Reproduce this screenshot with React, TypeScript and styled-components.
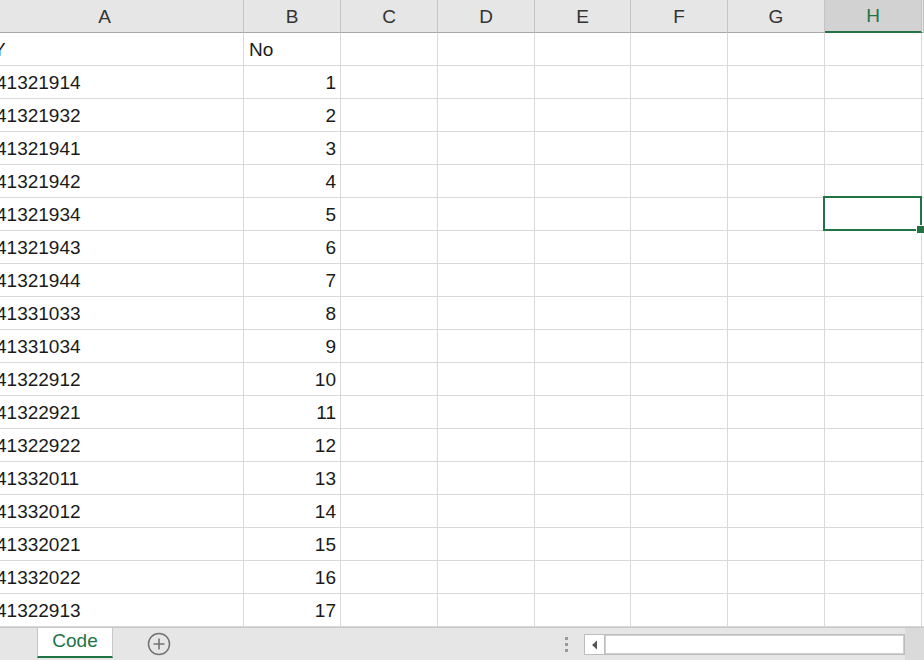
import React from 'react';
import styled, { createGlobalStyle } from 'styled-components';

const GlobalStyle = createGlobalStyle`
  html, body {
    margin: 0;
    padding: 0;
    background: #ffffff;
    overflow: hidden;
  }
  * {
    box-sizing: border-box;
  }
`;

const COLS = '244px 97px 97px 97px 96px 97px 97px 97px 1fr';
const GREEN = '#217346';

const Window = styled.div`
  width: 924px;
  height: 660px;
  display: flex;
  flex-direction: column;
  font-family: 'Liberation Sans', 'Noto Sans CJK JP', sans-serif;
  color: #1a1a1a;
  overflow: hidden;
`;

const Sheet = styled.div`
  flex: 1;
  overflow: hidden;
  display: flex;
  flex-direction: column;
`;

const HeaderRow = styled.div`
  display: grid;
  grid-template-columns: ${COLS};
  height: 33px;
  flex: none;
`;

const HeadCell = styled.div<{ $active?: boolean; $shift?: number }>`
  display: flex;
  align-items: center;
  justify-content: center;
  padding-right: ${({ $shift }) => $shift || 0}px;
  background: ${({ $active }) => ($active ? '#d2d2d2' : '#e6e6e6')};
  border-right: 1px solid #c4c4c4;
  border-bottom: ${({ $active }) => ($active ? `2px solid ${GREEN}` : '1px solid #a8a8a8')};
  color: ${({ $active }) => ($active ? GREEN : '#333333')};
  font-size: 19px;
  padding-top: 1px;
`;

const Row = styled.div`
  display: grid;
  grid-template-columns: ${COLS};
  height: 33px;
  flex: none;
`;

const Cell = styled.div<{ $align?: 'left' | 'right'; $clip?: boolean }>`
  position: relative;
  display: flex;
  align-items: center;
  justify-content: ${({ $align }) => ($align === 'right' ? 'flex-end' : 'flex-start')};
  padding: 2px 4px 0 5px;
  border-right: 1px solid #d9d9d9;
  border-bottom: 1px solid #d9d9d9;
  font-size: 19px;
  white-space: nowrap;
  overflow: ${({ $clip }) => ($clip ? 'hidden' : 'visible')};
`;

const Clipped = styled.span<{ $shift: number }>`
  margin-left: ${({ $shift }) => $shift}px;
`;

const Selection = styled.div`
  position: absolute;
  z-index: 2;
  left: -2px;
  top: -2px;
  right: -1px;
  bottom: -1px;
  border: 2px solid ${GREEN};
  pointer-events: none;
  &::after {
    content: '';
    position: absolute;
    right: -5px;
    bottom: -5px;
    width: 7px;
    height: 7px;
    background: ${GREEN};
    border: 1px solid #ffffff;
  }
`;

const TabBar = styled.div`
  height: 33px;
  flex: none;
  display: flex;
  align-items: stretch;
  background: #e6e6e6;
  border-top: 1px solid #c6c6c6;
`;

const TabArea = styled.div`
  display: flex;
  align-items: flex-start;
  padding-left: 37px;
  width: 560px;
`;

const SheetTab = styled.div`
  width: 76px;
  height: 30px;
  background: #ffffff;
  border-left: 1px solid #c6c6c6;
  border-right: 1px solid #c6c6c6;
  border-bottom: 2px solid ${GREEN};
  color: ${GREEN};
  font-size: 19px;
  display: flex;
  align-items: center;
  justify-content: center;
  padding-bottom: 2px;
`;

const AddButton = styled.div`
  margin-left: 34px;
  margin-top: 4px;
  width: 24px;
  height: 24px;
  display: flex;
  align-items: center;
  justify-content: center;
`;

const Splitter = styled.div`
  width: 4px;
  display: flex;
  flex-direction: column;
  justify-content: center;
  gap: 3px;
  margin-left: 5px;
  span {
    width: 3px;
    height: 3px;
    background: #9a9a9a;
  }
`;

const ScrollBar = styled.div`
  display: flex;
  margin-left: 15px;
  margin-top: 6px;
  height: 21px;
  width: 321px;
  border: 1px solid #bdbdbd;
  background: #ffffff;
`;

const ArrowButton = styled.div`
  width: 20px;
  display: flex;
  align-items: center;
  justify-content: center;
  border-right: 1px solid #bdbdbd;
`;

const Track = styled.div`
  flex: 1;
  border: 1px solid #d0d0d0;
`;

const Filler = styled.div`
  flex: 1;
  background: #dadada;
`;

const data: [string, number][] = [
  ['41321914', 1],
  ['41321932', 2],
  ['41321941', 3],
  ['41321942', 4],
  ['41321934', 5],
  ['41321943', 6],
  ['41321944', 7],
  ['41331033', 8],
  ['41331034', 9],
  ['41322912', 10],
  ['41322921', 11],
  ['41322922', 12],
  ['41332011', 13],
  ['41332012', 14],
  ['41332021', 15],
  ['41332022', 16],
  ['41322913', 17],
];

const letters = ['A', 'B', 'C', 'D', 'E', 'F', 'G', 'H'];
const emptyCols = ['C', 'D', 'E', 'F', 'G', 'H', ''];

const App: React.FC = () => {
  return (
    <Window>
      <GlobalStyle />
      <Sheet>
        <HeaderRow>
          {letters.map(l => (
            <HeadCell key={l} $active={l === 'H'} $shift={l === 'A' ? 34 : 0}>
              {l}
            </HeadCell>
          ))}
          <HeadCell />
        </HeaderRow>
        <Row>
          <Cell $clip>
            <Clipped $shift={-12}>Y</Clipped>
          </Cell>
          <Cell>No</Cell>
          {emptyCols.map(c => (
            <Cell key={c} />
          ))}
        </Row>
        {data.map(([code, no]) => (
          <Row key={no}>
            <Cell $clip>
              <Clipped $shift={-9}>{code}</Clipped>
            </Cell>
            <Cell $align='right'>{no}</Cell>
            {emptyCols.map(c => (
              <Cell key={c}>{no === 5 && c === 'H' && <Selection />}</Cell>
            ))}
          </Row>
        ))}
      </Sheet>
      <TabBar>
        <TabArea>
          <SheetTab>Code</SheetTab>
          <AddButton>
            <svg width='24' height='24' viewBox='0 0 24 24'>
              <circle cx='12' cy='12' r='10.5' fill='none' stroke='#737373' strokeWidth='1.5' />
              <path d='M12 6.5v11M6.5 12h11' stroke='#737373' strokeWidth='1.6' />
            </svg>
          </AddButton>
        </TabArea>
        <Splitter>
          <span />
          <span />
          <span />
        </Splitter>
        <ScrollBar>
          <ArrowButton>
            <svg width='8' height='10' viewBox='0 0 8 10'>
              <path d='M6 0.5v9L1 5z' fill='#555555' />
            </svg>
          </ArrowButton>
          <Track />
        </ScrollBar>
        <Filler />
      </TabBar>
    </Window>
  );
};

export default App;
